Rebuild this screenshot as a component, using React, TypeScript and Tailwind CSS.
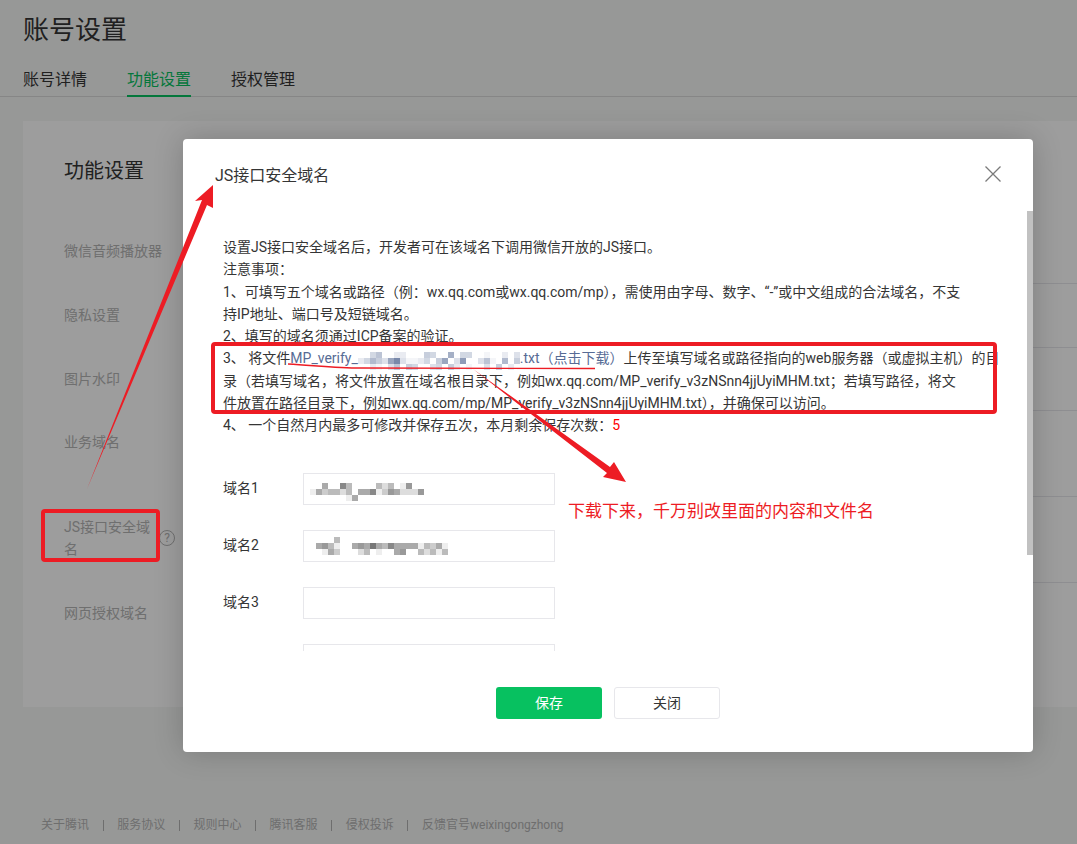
/**
 * Account settings page with the "JS接口安全域名" dialog open and red annotations on top.
 */
const settingRows = [
  { key: 'audio', label: <>微信音频播放器</>, rowClass: 'h-[64px] pt-[20px]' },
  { key: 'privacy', label: <>隐私设置</>, rowClass: 'h-[64px] pt-[20px]' },
  { key: 'watermark', label: <>图片水印</>, rowClass: 'h-[63px] pt-[20px]' },
  { key: 'business', label: <>业务域名</>, rowClass: 'h-[86px] pt-[20px]' },
  { key: 'js', label: <>JS接口安全域<br />名</>, rowClass: 'h-[86px] pt-[19px]', help: true },
  { key: 'oauth', label: <>网页授权域名</>, rowClass: 'h-[62px] pt-[19px]', last: true },
];

const footerLinks = ['关于腾讯', '服务协议', '规则中心', '腾讯客服', '侵权投诉', '反馈官号weixingongzhong'];

// Each character is one 6px cell: hex digit is its lightness, space is empty
const Mosaic: React.FC<{ rows: string[]; color?: string; className?: string }> = ({ rows, color = '#000000', className }) => {
  const cols = Math.max(...rows.map((r) => r.length));
  return (
    <svg width={cols * 6} height={rows.length * 6} className={className}>
      {rows.map((row, y) =>
        row.split('').map((c, x) =>
          c === ' ' ? null : (
            <rect key={`${x}-${y}`} x={x * 6} y={y * 6} width={6} height={6} fill={color} opacity={1 - parseInt(c, 16) / 15} />
          ),
        ),
      )}
    </svg>
  );
};

const DomainField: React.FC<{ name: string; children?: React.ReactNode }> = ({ name, children }) => (
  <div className="flex items-start h-[57px] shrink-0">
    <div className="w-[80px] h-[30px] leading-[30px] text-[#353535]">{name}</div>
    <div className="relative w-[252px] h-[32px] border border-[#e7e7eb] bg-white">{children}</div>
  </div>
);

export default function App() {
  return (
    <div className="relative w-[1077px] h-[844px] overflow-hidden bg-[#f5f7f6] font-['Roboto','Noto_Sans_CJK_SC',sans-serif] text-[14px]">
      <div className="pl-[23px] h-[64px] text-[26px] leading-[60px] text-[#353535]">账号设置</div>
      <div className="flex gap-10 pl-[23px] h-[33px] border-b border-[#dadada] text-[16px] leading-[32px] text-[#353535]">
        <div>账号详情</div>
        <div className="h-[33px] border-b-2 border-[#07c160] text-[#07c160]">功能设置</div>
        <div>授权管理</div>
      </div>

      <div className="ml-[23px] mt-[24px] h-[586px] bg-white pt-[36px]">
        <div className="pl-[41px] text-[20px] leading-[28px] text-[#353535]">功能设置</div>
        <div className="mt-[35px]">
          {settingRows.map((row) => (
            <div key={row.key} className="flex">
              <div className={`relative w-[160px] pl-[41px] whitespace-nowrap leading-[22px] text-[#b4b4b4] ${row.rowClass}`}>
                {row.label}
                {row.help && (
                  <span className="absolute left-[136px] top-[33px] flex items-center justify-center w-[16px] h-[16px] rounded-full border border-[#b4b4b4] text-[12px] leading-none">
                    ?
                  </span>
                )}
              </div>
              <div className={`flex-1 ${row.last ? '' : 'border-b border-[#e7e7eb]'}`} />
            </div>
          ))}
        </div>
      </div>

      <div className="flex items-center gap-[13.6px] pl-[41px] mt-[109px] text-[12px] leading-[18px] text-[#b3b3b3]">
        {footerLinks.map((link, i) => (
          <div key={link} className="flex items-center gap-[13.6px]">
            {i > 0 && <span className="w-px h-[11px] bg-[#b3b3b3]" />}
            <span>{link}</span>
          </div>
        ))}
      </div>

      <div className="absolute inset-0 bg-[rgba(0,0,0,0.385)]" />

      <div className="absolute left-[183px] top-[139px] flex flex-col w-[850px] h-[613px] rounded bg-white shadow-[0_0_30px_rgba(0,0,0,0.2)]">
        <div className="flex items-start justify-between h-[72px] shrink-0 pl-[32px] pr-[32px] pt-[26px]">
          <div className="text-[16px] leading-[22px] text-[#353535]">JS接口安全域名</div>
          <svg width="16" height="16" viewBox="0 0 16 16" className="mt-[1px] mr-[0px] text-[#7a7a7a]">
            <path d="M0.5 0.5 L15.5 15.5 M15.5 0.5 L0.5 15.5" stroke="currentColor" strokeWidth="1.3" fill="none" />
          </svg>
        </div>

        <div className="relative flex-1 min-h-0 overflow-hidden pl-[40px] pt-[25px]">
          <div className="absolute right-0 top-0 w-[6px] h-[344px] bg-[#c1c1c1]" />
          <div className="whitespace-nowrap leading-[22.3px] text-[#353535]">
            设置JS接口安全域名后，开发者可在该域名下调用微信开放的JS接口。<br />
            注意事项：<br />
            1、可填写五个域名或路径（例：wx.qq.com或wx.qq.com/mp），需使用由字母、数字、“-”或中文组成的合法域名，不支<br />
            持IP地址、端口号及短链域名。<br />
            2、填写的域名须通过ICP备案的验证。<br />
            3、 将文件
            <span className="text-[#576b95]">
              MP_verify_
              <Mosaic
                color="#576b95"
                className="inline-block align-[-5px] -my-[2px]"
                rows={[
                  '  b9  dd   ab  7 bb  e  d c',
                  'db8ac63ceedb a6 c5  c9e 8 a',
                  '  de c9 ab  cb ad e  c a d',
                ]}
              />
              .txt（点击下载）
            </span>
            上传至填写域名或路径指向的web服务器（或虚拟主机）的目<br />
            录（若填写域名，将文件放置在域名根目录下，例如wx.qq.com/MP_verify_v3zNSnn4jjUyiMHM.txt；若填写路径，将文<br />
            件放置在路径目录下，例如wx.qq.com/mp/MP_verify_v3zNSnn4jjUyiMHM.txt），并确保可以访问。<br />
            4、 一个自然月内最多可修改并保存五次，本月剩余保存次数：<span className="text-[#ff0000]">5</span>
          </div>
          <div className="mt-[36px] flex flex-col">
            <DomainField name="域名1">
              <Mosaic
                className="absolute left-0 top-[9px]"
                rows={['   a  8bf   bdb e9  f', 'feacbbdb aa8ec9addd9', '       ea']}
              />
            </DomainField>
            <DomainField name="域名2">
              <Mosaic
                className="absolute left-[-6px] top-0"
                rows={[
                  'f',
                  '     fb',
                  'f  a9bef a9a7ab8aaaaebcae',
                  '    eacf  db e  a9  bdbeb',
                  '                          f',
                ]}
              />
            </DomainField>
            <DomainField name="域名3" />
            <DomainField name="域名4" />
          </div>
        </div>

        <div className="flex justify-center gap-[12px] h-[101px] shrink-0 pt-[36px]">
          <button className="w-[106px] h-[32px] rounded-[3px] bg-[#07c160] text-white">保存</button>
          <button className="w-[106px] h-[32px] rounded-[3px] border border-[#e7e7eb] bg-white text-[#353535]">关闭</button>
        </div>
      </div>

      {/* red annotations drawn over the screenshot */}
      <div className="absolute left-[211px] top-[342px] w-[786px] h-[72px] border-4 border-[#ed1c24] rounded-sm" />
      <div className="absolute left-[41px] top-[509px] w-[119px] h-[53px] border-4 border-[#ed1c24] rounded-sm" />
      <svg width="1077" height="844" className="absolute left-0 top-0 pointer-events-none">
        <polygon points="87,489 202,200 195,201 213,185 213,208 207,205" fill="#ed1c24" />
        <polygon points="473,369 610,467 614,462 626,482 603,477 607,473" fill="#ed1c24" />
        <path d="M288 364 C320 366 340 368 360 368 L595 368.5" stroke="#ed1c24" strokeWidth="1.3" fill="none" />
      </svg>
      <div className="absolute left-[568px] top-[499px] text-[17px] leading-[24px] text-[#ed1c24]">
        下载下来，千万别改里面的内容和文件名
      </div>
    </div>
  );
}
